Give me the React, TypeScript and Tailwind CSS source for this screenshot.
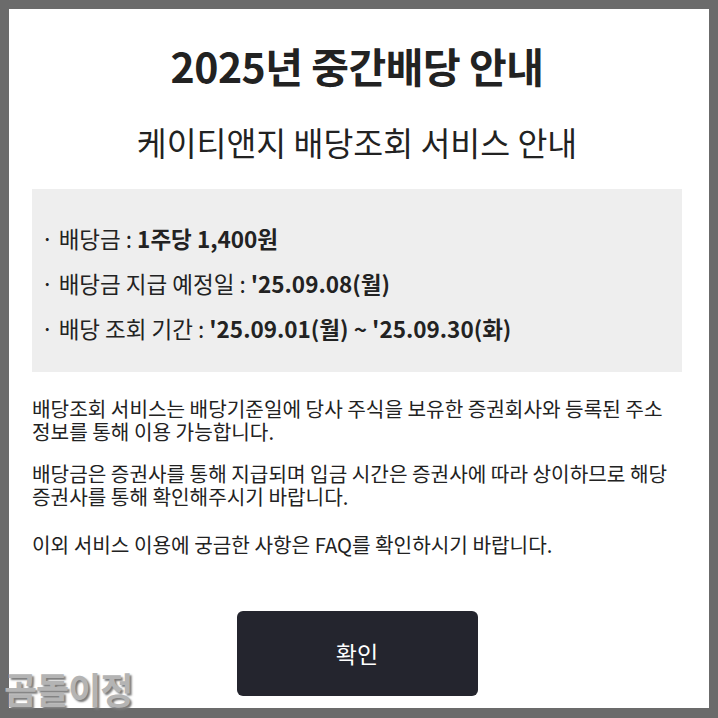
import React from "react";

const font = { fontFamily: '"Noto Sans CJK KR", "Noto Sans", sans-serif' };

export default function App() {
  return (
    <div
      className="relative w-[718px] h-[718px] bg-[#6b6b6b] pt-[9px] pl-[9px] pr-[9px] pb-[10px] overflow-hidden"
      style={font}
    >
      <div className="w-full h-full bg-white flex flex-col pl-[23px] pr-[27px] text-[#222222]">
        <h1 className="text-center font-bold text-[41px] leading-[48px] mt-[32px] tracking-[-0.5px]">
          2025년 중간배당 안내
        </h1>
        <h2 className="text-center text-[32.5px] leading-[40px] mt-[33px]">
          케이티앤지 배당조회 서비스 안내
        </h2>
        <div className="mt-[27px] bg-[#eeeeee] h-[183px] pl-[9px] pt-[33px] flex flex-col gap-[12px] text-[22.5px] leading-[33px]">
          <div>
            · 배당금 : <span className="font-bold">1주당 1,400원</span>
          </div>
          <div>
            · 배당금 지급 예정일 : <span className="font-bold">'25.09.08(월)</span>
          </div>
          <div>
            · 배당 조회 기간 : <span className="font-bold">'25.09.01(월) ~ '25.09.30(화)</span>
          </div>
        </div>
        <div className="mt-[25px] text-[20.2px] leading-[23px] flex flex-col">
          <p>
            배당조회 서비스는 배당기준일에 당사 주식을 보유한 증권회사와 등록된 주소
            <br />
            정보를 통해 이용 가능합니다.
          </p>
          <p className="mt-[19px]">
            배당금은 증권사를 통해 지급되며 입금 시간은 증권사에 따라 상이하므로 해당
            <br />
            증권사를 통해 확인해주시기 바랍니다.
          </p>
          <p className="mt-[25px]">이외 서비스 이용에 궁금한 사항은 FAQ를 확인하시기 바랍니다.</p>
        </div>
        <div className="mt-auto mb-[12px] flex justify-center">
          <button className="w-[241px] h-[85px] rounded-[6px] bg-[#24252e] text-white text-[23px]">
            확인
          </button>
        </div>
      </div>
      <div
        className="absolute left-[4px] top-[668px] text-[36px] font-bold text-[#b4b4b4] leading-[40px] tracking-[-1px]"
        style={{ textShadow: "2px 2px 2px #7a7a7a" }}
      >
        곰돌이정
      </div>
    </div>
  );
}
